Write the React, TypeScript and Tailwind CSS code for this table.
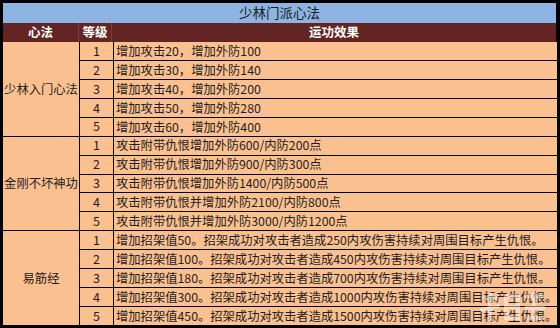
import React from "react";

const groups: { name: string; rows: string[] }[] = [
  {
    name: "少林入门心法",
    rows: [
      "增加攻击20，增加外防100",
      "增加攻击30，增加外防140",
      "增加攻击40，增加外防200",
      "增加攻击50，增加外防280",
      "增加攻击60，增加外防400",
    ],
  },
  {
    name: "金刚不坏神功",
    rows: [
      "攻击附带仇恨增加外防600/内防200点",
      "攻击附带仇恨增加外防900/内防300点",
      "攻击附带仇恨增加外防1400/内防500点",
      "攻击附带仇恨并增加外防2100/内防800点",
      "攻击附带仇恨并增加外防3000/内防1200点",
    ],
  },
  {
    name: "易筋经",
    rows: [
      "增加招架值50。招架成功对攻击者造成250内攻伤害持续对周围目标产生仇恨。",
      "增加招架值100。招架成功对攻击者造成450内攻伤害持续对周围目标产生仇恨。",
      "增加招架值180。招架成功对攻击者造成700内攻伤害持续对周围目标产生仇恨。",
      "增加招架值300。招架成功对攻击者造成1000内攻伤害持续对周围目标产生仇恨。",
      "增加招架值450。招架成功对攻击者造成1500内攻伤害持续对周围目标产生仇恨。",
    ],
  },
];

export default function App() {
  return (
    <div
      className="relative w-[560px] h-[328px] bg-black pt-[3px] pl-[3px] pr-[4px] pb-[3px] overflow-hidden"
      style={{ fontFamily: '"Noto Sans CJK SC", "Noto Sans", sans-serif' }}
    >
      <div className="flex flex-col w-[553px] h-[322px]">
        <div className="h-[20px] bg-[#8db4e2] flex items-center justify-center text-[13.5px] text-[#1c1c1c] leading-none">
          少林门派心法
        </div>
        <div className="h-[19px] bg-[#632523] grid grid-cols-[76px_33px_1fr] text-white font-bold text-[12.5px] leading-none">
          <div className="flex items-center justify-center border-r border-[#7d3b39]">心法</div>
          <div className="flex items-center justify-center border-r border-[#7d3b39]">等级</div>
          <div className="flex items-center justify-center">运功效果</div>
        </div>
        <div className="h-[283px] bg-black grid grid-cols-[76px_33px_1fr] grid-rows-[repeat(15,1fr)] gap-px text-[12.3px] text-[#1e1e1e] leading-none">
          {groups.map((g, gi) => (
            <React.Fragment key={g.name}>
              <div
                className="col-start-1 bg-[#fac090] flex items-center justify-center whitespace-nowrap"
                style={{ gridRow: `${gi * 5 + 1} / span 5` }}
              >
                {g.name}
              </div>
              {g.rows.map((r, ri) => (
                <React.Fragment key={ri}>
                  <div
                    className="col-start-2 bg-[#fac090] flex items-center justify-center text-[12.5px]"
                    style={{ gridRow: `${gi * 5 + ri + 1}` }}
                  >
                    {ri + 1}
                  </div>
                  <div
                    className="col-start-3 bg-[#fac090] flex items-center pl-[2px] whitespace-nowrap"
                    style={{ gridRow: `${gi * 5 + ri + 1}` }}
                  >
                    {r}
                  </div>
                </React.Fragment>
              ))}
            </React.Fragment>
          ))}
        </div>
      </div>
      <svg
        className="absolute left-[478px] top-[290px] pointer-events-none"
        width="72"
        height="36"
        viewBox="0 0 72 36"
      >
        <g fill="none" stroke="white" strokeOpacity="0.45" strokeWidth="4" strokeLinecap="round">
          <path d="M6 8 L18 8 M12 4 L12 30 M4 20 L20 16" />
          <path d="M28 6 L40 6 L40 28 L28 28 Z M28 17 L40 17" />
          <path d="M48 6 L64 6 M56 4 L56 30 M48 18 L66 18 M50 28 L64 28" />
        </g>
      </svg>
    </div>
  );
}
